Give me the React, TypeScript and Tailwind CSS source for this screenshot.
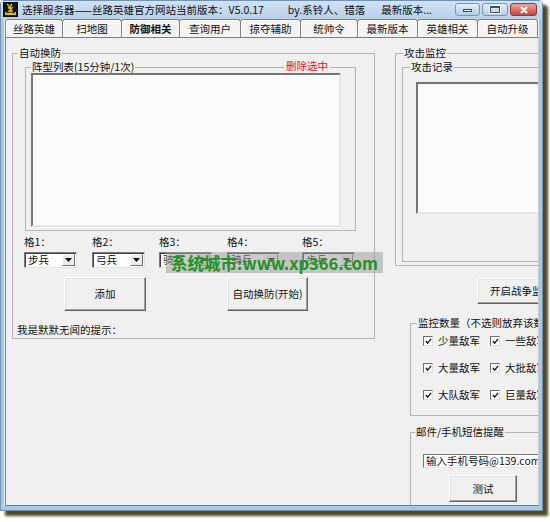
import React from "react";

const cjk = "font-['Noto_Sans_CJK_SC','Noto_Sans',sans-serif]";

const tabs = [
  { label: "丝路英雄", w: "w-[58px]" },
  { label: "扫地图", w: "w-[60px]" },
  { label: "防御相关", w: "w-[59px]", active: true },
  { label: "查询用户", w: "w-[62px]" },
  { label: "掠夺辅助", w: "w-[61px]" },
  { label: "统帅令", w: "w-[58px]" },
  { label: "最新版本", w: "w-[61px]" },
  { label: "英雄相关", w: "w-[61px]" },
  { label: "自动升级", w: "w-[61px]" },
];

function Logo() {
  return (
    <svg viewBox="0 0 15 15" className="w-[15px] h-[15px] ml-[2px] shrink-0">
      <rect x="0" y="0" width="15" height="15" fill="#111" />
      <path d="M4 2 L6 4 M9 2 L7 5 L5 6 M6 6 L9 6 L6 9 L10 9" stroke="#f2c400" strokeWidth="1.4" fill="none" />
      <path d="M2 12 Q7.5 9 13 12 L13 13 L2 13 Z" fill="#f2c400" />
      <rect x="2" y="10" width="1.5" height="3" fill="#f2c400" />
      <rect x="11.5" y="10" width="1.5" height="3" fill="#f2c400" />
    </svg>
  );
}

function Btn({ children, className }: { children: React.ReactNode; className?: string }) {
  return (
    <div
      className={`flex items-center justify-center bg-[#f0f0f0] border border-t-white border-l-white border-r-[#646464] border-b-[#646464] shadow-[inset_-1px_-1px_0_#a0a0a0,inset_1px_1px_0_#e3e3e3] text-[10.5px] leading-[12px] whitespace-nowrap overflow-hidden ${className ?? ""}`}
    >
      {children}
    </div>
  );
}

function Select({ value }: { value: string }) {
  return (
    <div className="h-[16px] w-[53px] bg-white border border-t-[#7b7b7b] border-l-[#7b7b7b] border-r-[#e2e2e2] border-b-[#e2e2e2] shadow-[inset_1px_1px_0_#404040] flex items-center">
      <span className="ml-[3px] flex-1 text-[10.5px] leading-[12px]">{value}</span>
      <span className="w-[13px] h-[12px] mr-[1px] bg-[#ececec] border border-t-white border-l-white border-r-[#6e6e6e] border-b-[#6e6e6e] flex items-center justify-center">
        <svg viewBox="0 0 7 4" className="w-[7px] h-[4px]">
          <path d="M0 0 L7 0 L3.5 4 Z" fill="#111" />
        </svg>
      </span>
    </div>
  );
}

function Check({ label }: { label: string }) {
  return (
    <div className="flex items-center w-[67px] shrink-0">
      <span className="w-[10px] h-[10px] bg-white border border-t-[#6f6f6f] border-l-[#6f6f6f] border-r-[#dedede] border-b-[#dedede] flex items-center justify-center">
        <svg viewBox="0 0 8 8" className="w-[7px] h-[7px]">
          <path d="M1 3.5 L3 5.8 L7 1" stroke="#1b1b1b" strokeWidth="1.6" fill="none" />
        </svg>
      </span>
      <span className="ml-[5px] text-[10.5px] leading-[12px] whitespace-nowrap">{label}</span>
    </div>
  );
}

function Group({
  label,
  className,
  legend,
  children,
}: {
  label: string;
  className?: string;
  legend?: string;
  children?: React.ReactNode;
}) {
  return (
    <fieldset className={`relative min-w-0 shrink-0 border border-[#b4b4b4] ${className ?? ""}`}>
      <legend className={`px-[1px] text-[10.5px] leading-[12px] whitespace-nowrap ${legend ?? "ml-[6px]"}`}>{label}</legend>
      {children}
    </fieldset>
  );
}

export default function App() {
  return (
    <div className={`relative w-[550px] h-[522px] bg-white overflow-hidden text-[#111] ${cjk}`}>
      <div className="w-[543px] h-[511px] flex flex-col bg-[#a8c7e5] border border-[#6f93b8] rounded-t-[4px] shadow-[5px_5px_3px_#4b4a20]">
        {/* title bar */}
        <div className="h-[18px] shrink-0 flex items-start bg-gradient-to-b from-[#d2e2f3] to-[#b8d0e9]">
          <div className="mt-[1px] flex items-center">
            <Logo />
            <span className="ml-[4px] text-[10.5px] leading-[15px] whitespace-nowrap">
              选择服务器——丝路英雄官方网站当前版本：V5.0.17
            </span>
            <span className="ml-[24px] text-[10.5px] leading-[15px] whitespace-nowrap">by.系铃人、错落</span>
            <span className="ml-[16px] text-[10.5px] leading-[15px] whitespace-nowrap">最新版本...</span>
          </div>
          <div className="ml-auto mr-[5px] mt-[2px] flex gap-[2px]">
            <div className="w-[25px] h-[13px] rounded-[3px] border border-[#7896b8] bg-gradient-to-b from-[#e6eff9] to-[#b3cbe5] flex items-end justify-center pb-[3px]">
              <div className="w-[9px] h-[3px] bg-white border border-[#3c4e66]" />
            </div>
            <div className="w-[26px] h-[13px] rounded-[3px] border border-[#7896b8] bg-gradient-to-b from-[#e6eff9] to-[#b3cbe5] flex items-center justify-center">
              <div className="w-[10px] h-[7px] border border-[#3c4e66] border-t-[2px] bg-transparent shadow-[0_0_0_1px_#fff]" />
            </div>
            <div className="w-[27px] h-[13px] rounded-[3px] border border-[#8a3a33] bg-gradient-to-b from-[#e9a597] to-[#c5433a] flex items-center justify-center">
              <svg viewBox="0 0 10 8" className="w-[10px] h-[8px]">
                <path d="M2 1 L8 7 M8 1 L2 7" stroke="#fff" strokeWidth="2" />
              </svg>
            </div>
          </div>
        </div>

        {/* client */}
        <div className="flex-1 mx-[3px] mb-[4px] bg-[#f0f0f0] overflow-hidden flex flex-col">
          {/* tabs */}
          <div className="h-[18px] shrink-0 flex items-end pl-[1px]">
            {tabs.map((t, i) => (
              <div
                key={t.label}
                className={`${t.w} ${i > 0 ? "-ml-[1px]" : ""} h-[18px] shrink-0 rounded-t-[3px] border border-b-0 border-[#808080] bg-[#f4f4f4] shadow-[inset_1px_1px_0_#fff] flex items-center justify-center text-[10.5px] leading-[12px] ${t.active ? "font-bold" : ""}`}
              >
                {t.label}
              </div>
            ))}
          </div>

          {/* tab body */}
          <div className="flex-1 ml-[1px] border border-[#7e7e7e] border-r-[#c8c8c8] flex items-start overflow-hidden">
            {/* left: 自动换防 */}
            <Group label="自动换防" legend="ml-[5px]" className="ml-[6px] mt-[9px] w-[363px] h-[292px]">
              <Group label="阵型列表(15分钟/1次)" legend="ml-[5px]" className="mt-[2px] ml-[12px] w-[331px] h-[170px]">
                <span className="absolute right-[25px] -top-[13px] px-[2px] bg-[#f0f0f0] text-[10.5px] leading-[12px] text-[#e0151b]">
                  删除选中
                </span>
                <div className="ml-[5px] w-[310px] h-[154px] bg-[#fbfbfb] border-2 border-t-[#777] border-l-[#777] border-r-[#e6e6e6] border-b-[#e6e6e6]" />
              </Group>

              <div className="mt-[5px] flex">
                {[
                  { l: "格1：", v: "步兵", m: "ml-[11px]" },
                  { l: "格2：", v: "弓兵", m: "ml-[15px]" },
                  { l: "格3：", v: "骑兵", m: "ml-[14px]" },
                  { l: "格4：", v: "骑兵", m: "ml-[15px]" },
                  { l: "格5：", v: "步兵", m: "ml-[22px]" },
                ].map((c) => (
                  <div key={c.l} className={`${c.m} w-[53px] flex flex-col`}>
                    <span className="text-[10.5px] leading-[12px]">{c.l}</span>
                    <div className="mt-[4px]">
                      <Select value={c.v} />
                    </div>
                  </div>
                ))}
              </div>

              <div className="mt-[9px] flex">
                <Btn className="ml-[51px] w-[82px] h-[34px]">添加</Btn>
                <Btn className="ml-[81px] w-[81px] h-[34px]">自动换防(开始)</Btn>
              </div>

              <div className="mt-[13px] ml-[4px] text-[10.5px] leading-[12px]">我是默默无闻的提示：</div>
            </Group>

            {/* right column */}
            <div className="ml-[20px] mt-[9px] w-[170px] shrink-0 flex flex-col">
              <Group label="攻击监控" legend="ml-[7px]" className="w-[200px] h-[219px]">
                <Group label="攻击记录" legend="ml-[7px]" className="mt-[2px] ml-[6px] w-[200px] h-[201px]">
                  <div className="mt-[9px] ml-[13px] w-[140px] h-[132px] bg-[#fbfbfb] border-2 border-t-[#777] border-l-[#777] border-r-[#e6e6e6] border-b-[#e6e6e6]" />
                </Group>
              </Group>

              <Btn className="mt-[12px] ml-[82px] w-[82px] h-[26px] justify-start pl-[12px]">开启战争监控</Btn>

              <Group label="监控数量（不选则放弃该数量）" legend="ml-[6px]" className="mt-[13px] ml-[15px] w-[200px] h-[99px]">
                <div className="mt-[5px] ml-[12px] flex flex-col gap-[13px]">
                  <div className="flex h-[14px] items-center">
                    <Check label="少量敌军" />
                    <Check label="一些敌军" />
                  </div>
                  <div className="flex h-[14px] items-center">
                    <Check label="大量敌军" />
                    <Check label="大批敌军" />
                  </div>
                  <div className="flex h-[14px] items-center">
                    <Check label="大队敌军" />
                    <Check label="巨量敌军" />
                  </div>
                </div>
              </Group>

              <Group label="邮件/手机短信提醒" legend="ml-[4px]" className="mt-[10px] ml-[15px] w-[200px] h-[130px]">
                <div className="mt-[16px] ml-[12px] w-[140px] h-[14px] bg-white border border-t-[#777] border-l-[#777] border-r-[#e6e6e6] border-b-[#e6e6e6] flex items-center">
                  <span className="ml-[2px] text-[10.5px] leading-[12px] whitespace-nowrap">输入手机号码@139.com</span>
                </div>
                <Btn className="mt-[7px] ml-[38px] w-[68px] h-[27px]">测试</Btn>
              </Group>
            </div>
          </div>
        </div>
      </div>

      {/* watermark overlay */}
      <div className="absolute left-[166px] top-[252px] w-[217px] h-[21px] bg-[rgba(160,160,160,0.55)] flex items-center justify-center">
        <span className="text-[16.5px] leading-[18px] font-bold text-[#23931f] whitespace-nowrap">系统城市:www.xp366.com</span>
      </div>
    </div>
  );
}
